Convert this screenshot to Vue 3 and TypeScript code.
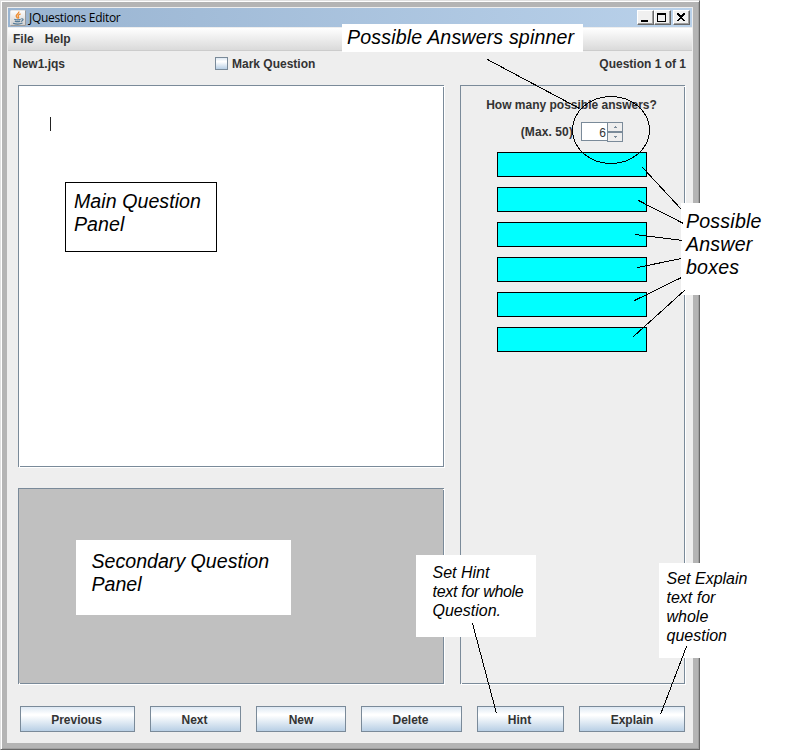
<script setup lang="ts">
import { ref } from 'vue'

interface Action {
  id: string
  label: string
}

interface Line {
  x1: number
  y1: number
  x2: number
  y2: number
}

const fileName = ref('New1.jqs')
const answerCount = ref(6)
const marked = ref(false)

const actions: Action[] = [
  { id: 'previous', label: 'Previous' },
  { id: 'next', label: 'Next' },
  { id: 'new', label: 'New' },
  { id: 'delete', label: 'Delete' },
  { id: 'hint', label: 'Hint' },
  { id: 'explain', label: 'Explain' },
]

const pointers: Line[] = [
  { x1: 487, y1: 59, x2: 579, y2: 108 },
  { x1: 642, y1: 167, x2: 681, y2: 209 },
  { x1: 638, y1: 200, x2: 683, y2: 223 },
  { x1: 635, y1: 234, x2: 682, y2: 240 },
  { x1: 637, y1: 267, x2: 681, y2: 258 },
  { x1: 634, y1: 300, x2: 681, y2: 277 },
  { x1: 633, y1: 336, x2: 685, y2: 289 },
  { x1: 472, y1: 623, x2: 496, y2: 713 },
  { x1: 686, y1: 646, x2: 660, y2: 714 },
]
</script>

<template>
  <main class="stage">
    <div class="window">
      <div class="client">
        <header class="titlebar">
          <svg class="java" width="16" height="16" viewBox="0 0 16 16">
            <defs>
              <linearGradient id="tile" x1="0" y1="0" x2="0" y2="1">
                <stop offset="0" stop-color="#fdfdfd" />
                <stop offset="1" stop-color="#cfcfcf" />
              </linearGradient>
            </defs>
            <rect x="0.5" y="0.5" width="15" height="15" rx="1" fill="url(#tile)" stroke="#e4e4e4" />
            <path d="M0.5 15.5h15v-15" fill="none" stroke="#9a9a9a" />
            <path d="M8.800 1.600c.8 1.800-3 2.800-2.600 4.500.2 1 1.200 1.500 1.500 2.300M10.600 3.800c-1.900.7-3 1.700-2.200 2.900.6.800.3 1.300-.1 1.800" fill="none" stroke="#ee8b2d" stroke-width="1.300" />
            <path d="M4.300 9.200c1.500.6 4.800.6 6.400 0M4.800 11.100c1.500.6 4 .6 5.400 0M3 13.200c2.600.9 7.200.9 9.500-.2M11.300 8.800c2.500-.4 2.300 2-.4 2.600" fill="none" stroke="#527a98" stroke-width="1.200" />
          </svg>
          <span class="title">JQuestions Editor</span>
          <div class="controls">
            <button class="control" aria-label="Minimize">
              <svg width="15" height="13" shape-rendering="crispEdges"><rect x="3" y="9" width="7" height="2" /></svg>
            </button>
            <button class="control" aria-label="Maximize">
              <svg width="15" height="13" shape-rendering="crispEdges"><path d="M2 2h9v9h-9zM3 4v6h7v-6z" fill-rule="evenodd" /></svg>
            </button>
            <button class="control close" aria-label="Close">
              <svg width="15" height="13" shape-rendering="crispEdges">
                <path d="M3 2h2v1h1v1h2v-1h1v-1h2v2h-1v1h-1v1h-1v1h1v1h1v1h1v1h-2v-1h-1v-1h-2v1h-1v1h-2v-1h1v-1h1v-1h1v-1h-1v-1h-1v-1h-1z" />
              </svg>
            </button>
          </div>
        </header>

        <nav class="menubar">
          <span>File</span>
          <span>Help</span>
        </nav>

        <div class="status">
          <span class="file">{{ fileName }}</span>
          <label class="mark" @click="marked = !marked">
            <span class="check"></span>Mark Question
          </label>
          <span class="position">Question 1 of 1</span>
        </div>

        <section class="workspace">
          <div class="questions">
            <div class="panel primary"><span class="caret"></span></div>
            <div class="panel secondary"></div>
          </div>
          <div class="panel answers">
            <div class="prompt">How many possible answers?</div>
            <div class="count">
              <span class="limit">(Max. 50)</span>
              <div class="spinner">
                <span class="value">{{ answerCount }}</span>
                <div class="steps">
                  <button class="step" aria-label="More" @click="answerCount++">
                    <svg width="5" height="3" shape-rendering="crispEdges"><path d="M2 0h1v1h1v1h-3v-1h1z" /></svg>
                  </button>
                  <button class="step" aria-label="Fewer" @click="answerCount--">
                    <svg width="5" height="3" shape-rendering="crispEdges"><path d="M1 0h3v1h-1v1h-1v-1h-1z" /></svg>
                  </button>
                </div>
              </div>
            </div>
            <div class="boxes">
              <div v-for="n in answerCount" :key="n" class="box"></div>
            </div>
          </div>
        </section>

        <footer class="actions">
          <button v-for="a in actions" :key="a.id" class="action" :class="a.id">{{ a.label }}</button>
        </footer>
      </div>
    </div>

    <div class="note note-spinner">Possible Answers spinner</div>
    <div class="note note-main">Main Question<br />Panel</div>
    <div class="note note-secondary">Secondary Question<br />Panel</div>
    <div class="note note-boxes">Possible<br />Answer<br />boxes</div>
    <div class="note small note-hint">Set Hint<br /><span class="tight">text for whole</span><br />Question.</div>
    <div class="note small note-explain">Set Explain<br />text for<br />whole<br />question</div>

    <svg class="overlay" width="800" height="750" viewBox="0 0 800 750" shape-rendering="crispEdges">
      <g transform="translate(.5 .5)">
        <line v-for="(l, i) in pointers" :key="i" v-bind="l" />
        <ellipse cx="610.500" cy="129.500" rx="38.500" ry="33.500" />
      </g>
    </svg>
  </main>
</template>

<style>
body {
  margin: 0;
  background: #fff;
}
</style>

<style scoped>
* {
  box-sizing: border-box;
}
button {
  margin: 0;
  padding: 0;
  font: inherit;
  color: inherit;
  border: 0;
  border-radius: 0;
}
.stage {
  position: relative;
  width: 800px;
  height: 750px;
  overflow: hidden;
  font: bold 12px/14px "Liberation Sans", Arial, sans-serif;
  color: #333;
}
.window {
  width: 700px;
  height: 750px;
  padding: 6px;
  background: #b4b4b4;
  border: 1px solid;
  border-color: #e0e0e0 #696969 #696969 #e0e0e0;
  box-shadow: inset 1px 1px #fff, inset -1px -1px #a0a0a0;
}
.client {
  width: 686px;
  height: 736px;
  padding: 1px;
  display: flex;
  flex-direction: column;
  background: #eee;
}
.titlebar {
  height: 19px;
  flex: none;
  display: flex;
  align-items: center;
  padding: 0 2px;
  background: linear-gradient(90deg, #99b4d1, #b9d1ea);
}
.java {
  flex: none;
}
.title {
  flex: 1;
  padding-left: 3px;
  font: 12px/18px "Open Sans", "Noto Sans", sans-serif;
  letter-spacing: -0.3px;
  color: #000;
}
.controls {
  display: flex;
}
.control {
  width: 17px;
  height: 15px;
  display: block;
  background: #f0f0f0;
  border: 1px solid;
  border-color: #fff #696969 #696969 #fff;
  box-shadow: inset -1px -1px #a0a0a0;
}
.control svg {
  display: block;
}
.close {
  margin-left: 2px;
}
.menubar {
  height: 24px;
  flex: none;
  display: flex;
  gap: 11px;
  padding: 4px 5px 0;
  background: linear-gradient(#fff, #dadada);
  border-top: 1px solid #eee;
  border-bottom: 1px solid #ccc;
}
.status {
  height: 34px;
  flex: none;
  display: flex;
  padding: 6px 6px 0 5px;
}
.file {
  width: 202px;
}
.mark {
  flex: 1;
  display: flex;
  gap: 4px;
}
.check {
  width: 13px;
  height: 13px;
  border: 1px solid #7a8a99;
  background: linear-gradient(#dde8f3, #fff 30%, #fff 35%, #b8cfe5);
}
.workspace {
  display: flex;
  gap: 16px;
  padding: 0 7px 0 10px;
}
.questions {
  display: flex;
  flex-direction: column;
  gap: 21px;
}
.panel {
  position: relative;
  border: 1px solid #7a8a99;
  box-shadow: 1px 1px #fff;
}
.panel::before,
.panel::after {
  content: "";
  position: absolute;
  width: 1px;
  height: 1px;
  background: #fff;
}
.panel::before {
  left: 0;
  bottom: -1px;
}
.panel::after {
  right: -1px;
  top: 0;
}
.primary {
  width: 426px;
  height: 382px;
  padding: 31px;
  background: #fff;
}
.caret {
  display: block;
  width: 1px;
  height: 14px;
  background: #222;
}
.secondary {
  width: 426px;
  height: 196px;
  background: #c0c0c0;
}
.answers {
  width: 225px;
  height: 599px;
  padding-top: 12px;
}
.prompt {
  text-align: center;
  padding-right: 2px;
}
.count {
  display: flex;
  justify-content: flex-end;
  align-items: center;
  gap: 8px;
  margin-top: 10px;
  padding-right: 61px;
}
.limit {
  letter-spacing: 0.1px;
}
.spinner {
  width: 42px;
  height: 20px;
  display: flex;
  background: #eee;
}
.value {
  width: 26px;
  height: 19px;
  padding: 3px 1px 0 0;
  text-align: right;
  font-weight: normal;
  background: #fff;
  border: 1px solid #7a8a99;
  border-right: 0;
}
.steps {
  width: 16px;
  display: flex;
  flex-direction: column;
}
.step {
  height: 10px;
  display: flex;
  align-items: center;
  justify-content: center;
  border: 1px solid #7a8a99;
  background: #eee;
}
.step svg {
  fill: #7a8a99;
}
.boxes {
  display: flex;
  flex-direction: column;
  gap: 10px;
  margin: 10px 0 0 36px;
}
.box {
  width: 150px;
  height: 25px;
  background: #0ff;
  border: 1px solid #000;
}
.actions {
  display: flex;
  gap: 15px;
  padding: 22px 0 0 12px;
}
.action {
  height: 26px;
  padding-top: 1px;
  border: 1px solid #7a8a99;
  background: linear-gradient(#dde8f3, #fff 30%, #fff 35%, #b8cfe5);
  text-align: center;
}
.previous {
  width: 115px;
  padding-right: 2px;
}
.next {
  width: 91px;
  padding-right: 2px;
}
.new {
  width: 90px;
}
.delete {
  width: 101px;
  padding-right: 2px;
}
.hint {
  width: 87px;
  padding-right: 2px;
}
.explain {
  width: 106px;
}
.note {
  position: absolute;
  background: #fff;
  color: #000;
  font: italic 19.6px/23px "Liberation Sans", Arial, sans-serif;
  white-space: nowrap;
}
.note-spinner {
  left: 342px;
  top: 24px;
  width: 241px;
  height: 28px;
  padding: 2px 5px;
  letter-spacing: 0.15px;
}
.note-main {
  left: 65px;
  top: 182px;
  width: 152px;
  height: 70px;
  padding: 7px 8px;
  letter-spacing: 0.05px;
  border: 1px solid #000;
}
.note-secondary {
  left: 76px;
  top: 540px;
  width: 215px;
  height: 75px;
  padding: 10px 15.5px;
}
.note-boxes {
  left: 681px;
  top: 203px;
  width: 84px;
  height: 92px;
  padding: 7px 5px;
  letter-spacing: 0.2px;
}
.small {
  font-size: 16px;
  line-height: 19px;
}
.note-hint {
  left: 416px;
  top: 555px;
  width: 120px;
  height: 82px;
  padding: 8px 16.500px;
}
.tight {
  letter-spacing: -0.3px;
}
.note-explain {
  left: 659px;
  top: 563px;
  width: 92px;
  height: 95px;
  padding: 6px 7.500px;
}
.overlay {
  position: absolute;
  left: 0;
  top: 0;
  pointer-events: none;
  fill: none;
  stroke: #000;
}
</style>
